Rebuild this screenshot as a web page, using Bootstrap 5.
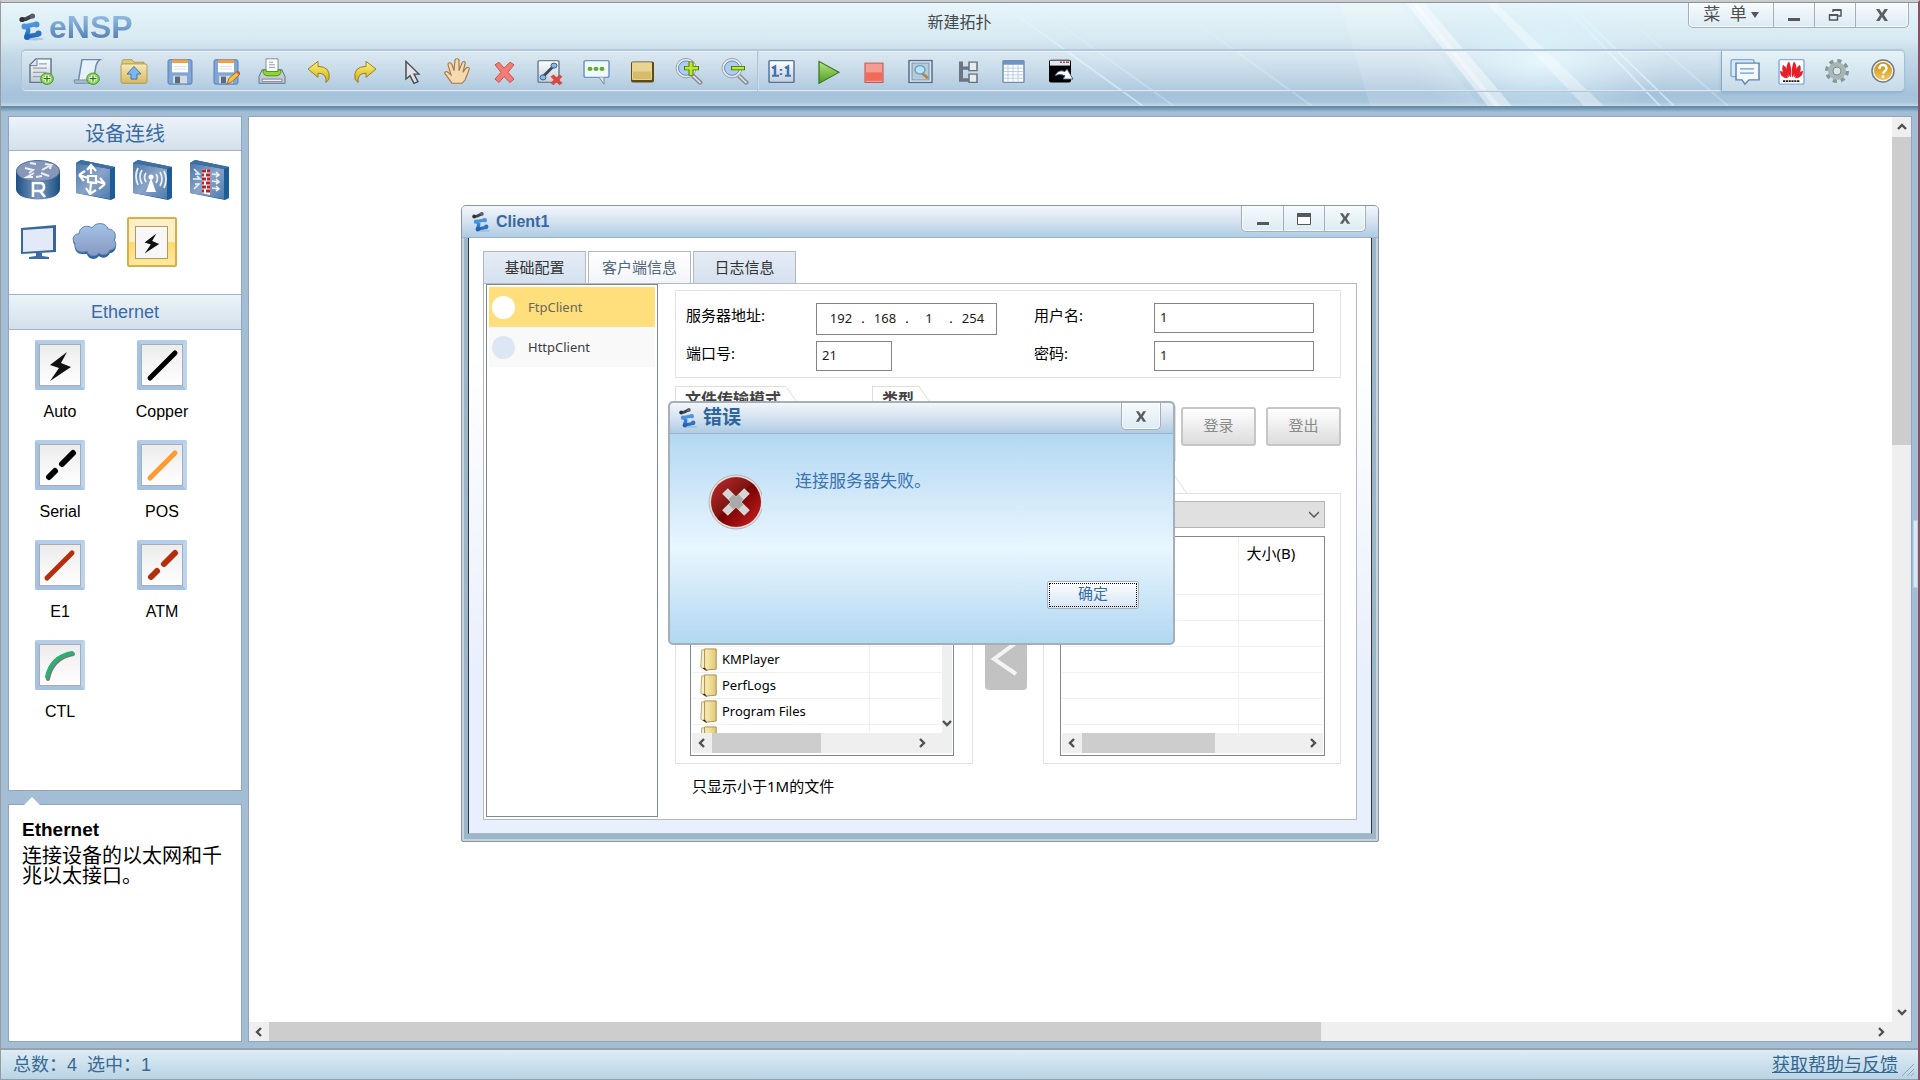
<!DOCTYPE html>
<html lang="zh-CN">
<head>
<meta charset="utf-8">
<meta name="viewport" content="width=device-width, initial-scale=1">
<title>eNSP</title>
<link href="https://cdn.jsdelivr.net/npm/bootstrap@5.3.0/dist/css/bootstrap.min.css" rel="stylesheet">
<style>
body{font-family:"Liberation Sans","Noto Sans CJK SC",sans-serif;font-size:16px;line-height:20px;color:#000;background:#a2bdd4;border-top:2px solid #c9cdcd;border-left:1px solid #979b9e;border-right:2px solid #944c62}
button,input,select{font-family:inherit}
.tahoma{font-family:"Noto Sans","Noto Sans CJK SC",sans-serif}
svg{display:block}
/* header */
.app-head{background:linear-gradient(#e8f6fb 0,#d6e8f1 38px,#c8dce9 48px,#a5c2db 92px,#a9c5dc 99px,#c3d8e4 103px);height:105px;border-bottom:1px solid #6b8798;border-top:1px solid #8d9294}
.streaks{right:0;top:0;pointer-events:none}
.brand{height:46px;padding:2px 0 0 18px}
.brand-word{font-size:32px;line-height:36px;font-weight:700;color:transparent;background:linear-gradient(#8db9e0 8px,#5580b3 30px);-webkit-background-clip:text;background-clip:text}
.doc-title{color:#45494c;top:10px}
.tool-strip{height:43px;margin-left:20px;margin-right:13px;border:1px solid #b4c6d4;border-top:2px solid #b3c8d8;border-radius:5px;background:linear-gradient(rgba(255,255,255,.36),rgba(255,255,255,.08));box-shadow:inset 0 1px #e9f2f8,inset 0 -1px #dce9f2}
.tool-main{width:722px;margin-left:5px}
.tool-sub{width:308px}
.tool-sep{width:2px;background:linear-gradient(90deg,#a3b6c6,#dfeaf2);margin-left:8px;margin-right:8px}
.tool-right{width:183px;padding-left:9px;gap:18px;border-left:1px solid #8eaabf;background:linear-gradient(#e6f3f8,#c6dae7);border-radius:0 5px 5px 0;box-shadow:0 2px 3px rgba(90,150,190,.4)}
.ico-btn{width:28px;height:32px;padding:0;border:0;background:none;display:flex;align-items:center;justify-content:center;flex:none}
.ico-btn svg{width:28px;height:27px;overflow:visible}
.ico-btn svg.disc{height:32px}
.win-ctl{top:0;border:1px solid #a5aeb4;border-top:0;border-radius:0 0 5px 5px;background:linear-gradient(#f6fbfd,#dcebf3);box-shadow:inset 0 0 0 1px rgba(255,255,255,.7)}
.win-ctl button{border:0;border-left:1px solid #a5b0b8;background:none;padding:0;color:#4c4e52;display:flex;align-items:center;justify-content:center}
.win-ctl button:first-child{border-left:0}
.head-ctl{right:9px;height:25px}
.head-ctl button{width:41px}
.head-ctl .menu-b{width:84px;font-size:17px}
.head-ctl .close-b{width:53px}
.client-ctl{right:12px;height:26px}
.client-ctl button{width:41px}
.err-ctl{right:12px;height:27px}
.err-ctl button{width:38px}
/* work area */
.shade{height:5px;background:linear-gradient(#5b8bab,#a2bdd4)}
.work{padding:4px 6px 6px 7px;gap:6px}
.side{width:234px;gap:13px}
.pane{background:#fff;border:1px solid #8ea6bf}
.pane-title{height:34px;font-size:18px;color:#3a6ba5;background:linear-gradient(#edf3f9,#d3e0ec);border-bottom:1px solid #a3b3c6}
.pane-title.cjk{font-size:20px}
.pane-title.second{border-top:1px solid #a3b3c6;height:36px}
.dev-grid{width:228px;row-gap:4px;padding-bottom:23px}
.dev{height:58px;border:0;background:none;padding:0;display:flex;align-items:center;justify-content:center}
.dev .picked{width:50px;height:50px;border:2px solid #dcae48;border-radius:2px;background:linear-gradient(#fdf0c8 50%,#fbdc74 50%,#fde9a0);display:flex;align-items:center;justify-content:center}
.link-grid{width:204px;padding-top:10px}
.link-item{height:100px;border:0;background:none;padding:0;display:flex;flex-direction:column;align-items:center;gap:12px;font-size:16px;line-height:20px;color:#000}
.tile{width:50px;height:50px;border:4px solid #a6c2e3;border-top-color:#b4cdea;border-right-color:#bdd4ee;background:linear-gradient(#ececec,#fff);box-shadow:inset 0 0 0 1px #a9adb2;border-radius:2px}
.tile svg{width:42px;height:42px}
.info{height:238px;padding:13px}
.info h2{font-size:19px;line-height:24px;font-weight:700;margin:0}
.info p{font-size:20px;line-height:20px;margin:4px 0 0}
.notch{left:14px;top:-9px}
.bar-v{width:19px;background:#efefef}
.bar-h{height:19px;background:#efefef}
.thumb{background:#cdcdcd}
.cap20{flex:0 0 20px;display:flex;align-items:center;justify-content:center}
.corner-gap{margin-right:20px}
.edge-tab{right:0;top:408px;width:5px;height:68px;background:#d8e9f3;border:1px solid #b9d0df}
.status{height:32px;border-top:2px solid #97a3ac;border-bottom:1px solid #8fa0aa;background:linear-gradient(#deecf5,#b9d4e5);font-size:18px;color:#386a92;padding:0 20px 0 12px}
.status a{color:#336790}
.grip{right:3px;bottom:2px}
/* client window */
.client{left:212px;top:88px;width:918px;border:1px solid #8b979f;border-radius:5px 5px 2px 2px;background:#9bb5c9;box-shadow:inset 0 0 0 2px #c5d4df}
.caption-bar{height:32px;padding-left:10px;gap:5px;font-weight:700;color:#3868a5;background:linear-gradient(#f3f6fb,#d5e2f0 50%,#aecce4);border-bottom:1px solid #9fb5c5;border-radius:4px 4px 0 0}
.client-body{margin:0 6px 7px;padding:13px 14px;border-left:1px solid #2f3438;border-right:1px solid #2f3438;border-bottom:1px solid #a9bac6;background:linear-gradient(#fff 20%,#e8effd 75%)}
.tab-row{gap:2px}
.tab-row button{width:103px;height:32px;border:1px solid #b4b8bd;border-bottom:0;background:linear-gradient(#e5edf6,#d5e1ef);color:#333;font-size:15px;line-height:20px;padding:0}
.tab-row button.active{background:linear-gradient(#fff,#f2f5f9);color:#52677c}
.tab-body{border:1px solid #b6bac0;background:#fff;height:537px;padding-left:2px}
.cli-list{width:172px;border:1px solid #7f8792;margin:0 0 2px;padding:2px;background:#fff}
.cli-list button{height:40px;width:100%;border:0;display:flex;align-items:center;gap:13px;padding:0 3px;font-size:13px;background:#f9f9f9;color:#3c3c3c}
.cli-list button.active{background:#fedf7c;color:#66695c}
.cli-list i{width:23px;height:23px;border-radius:50%;background:#dce7f3}
.cli-list .active i{background:#fff}
.form-side{padding:6px 16px 0 17px}
.thin{border:1px solid #e3e3e3}
.conn{height:88px;font-size:15px;padding:12px 26px 0 10px}
.conn-l{width:130px}.conn-m{width:120px}
.conn-row{height:38px}
.conn-row label{line-height:24px}
.fld{border:1px solid #858585;height:30px;font-size:13px;padding:0 5px 2px;background:#fff;color:#1b1b1b;border-radius:0;outline:0}
.ip-box{width:181px;height:32px;border:1px solid #858585;padding:0 0 3px 8px}
.ip-box input{width:32px;border:0;padding:0;text-align:center;font-size:13px;outline:0;background:none;color:#1b1b1b}
.ip-box span{width:12px;text-align:center;font-size:13px}
.w-port{width:76px}.w-user{width:160px}
.sec-tab{height:21px;margin-bottom:-1px;position:relative;z-index:1}
.sec-tab b{display:block;height:21px;border-top:1px solid #dedede;border-left:1px solid #dedede;padding:0 5px 0 9px;font-size:16px;line-height:24px;color:#444;background:#fff}
.sec-tab .wide{width:130px}
.sec-1{width:188px;margin-right:9px}.sec-2{width:304px;margin-right:5px}
.sec-body{height:55px}
.log-btn{width:75px;height:39px;margin-top:21px;border:2px solid #c6c6c6;border-radius:3px;background:linear-gradient(#fff,#dcdcdc);color:#8a8a8a;font-size:15px;padding:0 0 4px}
.files{margin-top:12px}
.file-col{width:298px}
.file-box{height:271px;padding:7px 18px 0 14px}
.file-box.remote{padding:7px 15px 0 16px}
.drive{width:100%;height:27px;border:1px solid #b5b5b5;background:#e0e0e0;appearance:none;display:block}
.drive-wrap{margin-bottom:8px}
.drive-wrap svg{right:6px;top:9px}
.lister{height:220px;border:1px solid #7f8792;padding:0 1px 2px;background:#fff}
.scroll-clip{height:196px;overflow:hidden}
.lister table{width:100%;border-collapse:collapse;table-layout:fixed;font-size:13px}
.lister th{height:31px;font-weight:400;font-size:15px;padding:0 0 0 8px}
.lister td{height:26px;padding:0 0 0 7px;border-bottom:1px solid #f0f0f0;line-height:18px}
.lister th+th,.lister td+td{border-left:1px solid #efefef}
.lister .bar-h{height:20px}
.push{width:42px;height:62px;border:0;border-radius:4px;background:#c2c2c2;padding:0}
.mid-col{width:70px;padding-top:155px;padding-left:12px}
.foot-note{font-size:15px;margin:12px 0 0 17px}
/* error dialog */
.err{left:206px;top:195px;width:507px;height:244px;z-index:5;border:2px solid #a5b0b6;border-radius:5px;background:linear-gradient(#b4d8f2 32px,#e9f6ff 145px,#b3d8f2 238px)}
.err .caption-bar{height:31px;padding-left:9px;font-size:19px;gap:5px;color:#2d659f}
.err .msg{font-size:17px;line-height:22px;color:#3a74b3;margin:0}
.ok-btn{right:34px;bottom:34px;width:92px;height:28px;border:1px solid #a9b2bb;border-radius:2px;background:linear-gradient(#fff,#d5e5f3);font-size:15px;line-height:18px;color:#356ca8;padding:1px}
.ok-btn span{display:block;height:24px;border:1px dotted #000;padding-top:1px}
.err-body{padding:37px 0 0 32px;gap:33px}
</style>
<script src="https://cdn.jsdelivr.net/npm/bootstrap@5.3.0/dist/js/bootstrap.bundle.min.js"></script>
</head>
<body class="d-flex flex-column min-vh-100">
<svg width="0" height="0" class="position-absolute" aria-hidden="true">
<defs>
<linearGradient id="gBlue" gradientUnits="userSpaceOnUse" x1="0" y1="9" x2="0" y2="26"><stop offset="0" stop-color="#58a0e6"/><stop offset="1" stop-color="#1c5fb2"/></linearGradient>
<linearGradient id="gGray" x1="0" y1="0" x2="0" y2="1"><stop offset="0" stop-color="#fff"/><stop offset="1" stop-color="#c4ccd6"/></linearGradient>
<linearGradient id="gGold" x1="0" y1="0" x2="0" y2="1"><stop offset="0" stop-color="#f7ebb8"/><stop offset="1" stop-color="#d7b85f"/></linearGradient>
<linearGradient id="gYel" x1="0" y1="0" x2="0" y2="1"><stop offset="0" stop-color="#fff27a"/><stop offset="1" stop-color="#cfae14"/></linearGradient>
<linearGradient id="gGreen" x1="0" y1="0" x2="0" y2="1"><stop offset="0" stop-color="#b8e886"/><stop offset="1" stop-color="#4d9a1c"/></linearGradient>
<linearGradient id="gDev" x1="0" y1="0" x2="1" y2="1"><stop offset="0" stop-color="#4a78aa"/><stop offset=".5" stop-color="#8ba3c8"/><stop offset="1" stop-color="#4c7cae"/></linearGradient>
<linearGradient id="gCyl" x1="0" y1="0" x2="1" y2="0"><stop offset="0" stop-color="#1e4f82"/><stop offset=".5" stop-color="#7d9cc3"/><stop offset="1" stop-color="#1a4c7f"/></linearGradient>
<linearGradient id="gCloud" x1="0" y1="0" x2="0" y2="1"><stop offset="0" stop-color="#a5c3e8"/><stop offset="1" stop-color="#8898c0"/></linearGradient>
<linearGradient id="gRed" x1="0" y1="0" x2="1" y2="1"><stop offset="0" stop-color="#c02c2c"/><stop offset=".45" stop-color="#7d1512"/><stop offset=".5" stop-color="#7a0000"/><stop offset="1" stop-color="#cf2424"/></linearGradient>
<linearGradient id="gHelp" x1="0" y1="0" x2="0" y2="1"><stop offset="0" stop-color="#c88c10"/><stop offset="1" stop-color="#f2c65c"/></linearGradient>
<linearGradient id="gFold" x1="0" y1="0" x2="1" y2="0"><stop offset="0" stop-color="#fbf0b9"/><stop offset="1" stop-color="#e1c673"/></linearGradient>
<symbol id="logo" viewBox="0 0 26 28"><ellipse cx="16" cy="26" rx="9" ry="1.500" fill="#7fa9d2" opacity=".5"/><path d="m3 6.500 4-.5 6-3" fill="none" stroke="#3f4449" stroke-width="4" stroke-linecap="round" stroke-linejoin="round"/><circle cx="13.500" cy="3" r="2.600" fill="#5a6066"/><circle cx="3" cy="6.500" r="2.600" fill="#2f3337"/><path d="M6 13.500 17 11M7 13.500q4 3 1 7.500v2.500L19 21.500" fill="none" stroke="url(#gBlue)" stroke-width="4.400" stroke-linecap="round" stroke-linejoin="round"/><circle cx="5.500" cy="13.500" r="3" fill="#4a93dc"/><circle cx="17.500" cy="11.500" r="3" fill="#4a93dc"/><circle cx="8" cy="24" r="3" fill="#1f66ba"/><circle cx="19.500" cy="20.500" r="3" fill="#2a73c6"/></symbol>
<symbol id="bolt" viewBox="0 0 42 42"><path d="M28 8 11 21l9 3-9 13 21-14-10-4z" fill="#111"/></symbol>
<symbol id="up" viewBox="0 0 10 10"><path d="M1 7 5 3l4 4" fill="none" stroke="#505050" stroke-width="2.400"/></symbol>
<symbol id="down" viewBox="0 0 10 10"><path d="M1 3l4 4 4-4" fill="none" stroke="#505050" stroke-width="2.400"/></symbol>
<symbol id="left" viewBox="0 0 10 10"><path d="M7 1 3 5l4 4" fill="none" stroke="#505050" stroke-width="2.400"/></symbol>
<symbol id="right" viewBox="0 0 10 10"><path d="M3 1l4 4-4 4" fill="none" stroke="#505050" stroke-width="2.400"/></symbol>
<symbol id="cross" viewBox="0 0 14 14"><path d="M1 1h3.500L7 5l2.500-4H13L9 7l4 6H9.500L7 9l-2.500 4H1l4-6z" fill="#5b5d62"/></symbol>
<symbol id="floppy" viewBox="0 0 28 32" preserveAspectRatio="none"><rect x="2" y="2" width="24" height="29" rx="2" fill="#7fa6d6" stroke="#527bb0"/><path d="M6 3h16v14H6z" fill="#fff"/><path d="M6 2h16v4H6z" fill="#f2a046"/><path d="M7 21h14v9H7z" fill="#d5dae0"/><path d="M9 22h5v8H9z" fill="#5b6b7c"/><path d="M8 10h12M8 13h12" stroke="#d8dde3"/></symbol>
<symbol id="plus" viewBox="0 0 14 14" preserveAspectRatio="none"><circle cx="7" cy="7" r="6.300" fill="#8fd45b" stroke="#3c8e1c"/><path d="M7 3v8M3 7h8" stroke="#fff" stroke-width="3.400"/><path d="M7 3.500v7M3.500 7h7" stroke="#2f7a14" stroke-width="1.300"/></symbol>
<symbol id="lens" viewBox="0 0 28 32" preserveAspectRatio="none"><path d="m17 20 8 9" stroke="#858b93" stroke-width="5" stroke-linecap="round"/><path d="m18 21 7 8" stroke="#d9dde1" stroke-width="2" stroke-linecap="round"/><ellipse cx="11" cy="12" rx="9" ry="10" fill="#aecbf0" stroke="#e6eaee" stroke-width="3"/><ellipse cx="11" cy="12" rx="10" ry="11.500" fill="none" stroke="#949ca5"/><ellipse cx="11" cy="12" rx="7.500" ry="8.500" fill="none" stroke="#5c87bc"/></symbol>
<symbol id="folder" viewBox="0 0 18 26"><path d="M2 3h3v17l1 4-5-3z" fill="#f4eed4" stroke="#b9a468"/><path d="m3 22 4 3 1-2-3-2z" fill="#222"/><path d="M5 2h12v21l-10 1-2-3z" fill="url(#gFold)" stroke="#a88f4c"/></symbol>
<symbol id="slab" viewBox="0 0 40 40"><path d="m1 3 5-3 34 7v31l-4 2-35-7z" fill="#1d5c97"/><path d="m1 3 34 6v30L1 33z" fill="url(#gDev)"/><path d="m1 3 5-3 34 7-5 2z" fill="#3e6fa4"/></symbol>
</defs>
</svg>

<header class="app-head position-relative overflow-hidden">
<svg class="streaks position-absolute" width="1000" height="103" viewBox="918 2 1000 128" preserveAspectRatio="none" aria-hidden="true">
<defs><radialGradient id="glow"><stop offset="0" stop-color="#e0f8ff" stop-opacity=".85"/><stop offset="1" stop-color="#d5f0fb" stop-opacity="0"/></radialGradient></defs>
<ellipse cx="1540" cy="75" rx="130" ry="75" fill="url(#glow)"/>
<path d="M1406 2h18l88 128h-24z" fill="#fff" opacity=".45"/><path d="M1412 2h4l84 128h-6z" fill="#fff" opacity=".35"/>
<path d="M1486 2h10l108 128h-20z" fill="#fff" opacity=".35"/>
<path d="m1562 2 98 128M1568 2l106 128M1000 2l143 128" stroke="#dff8ff" stroke-width="2" opacity=".6"/>
<path d="m1030 2 144 128M1200 30l112 100M1640 35l88 95" stroke="#dff8ff" stroke-width="2" opacity=".3"/>
<path d="M1340 2h60l80 128h-110z" fill="#fff" opacity=".12"/>
</svg>
<div class="brand d-flex align-items-center position-relative">
<svg width="26" height="28"><use href="#logo" width="26" height="28"/></svg>
<span class="brand-word ps-1">eNSP</span>
</div>
<div class="doc-title position-absolute start-50 translate-middle-x">新建拓扑</div>
<div class="win-ctl head-ctl position-absolute d-flex">
<button class="menu-b" type="button">菜&nbsp; 单<svg class="ms-1" width="8" height="8"><path d="M0 1h8L4 7z" fill="#55575c"/></svg></button>
<button type="button" aria-label="最小化"><svg width="14" height="14"><path d="M1 10h12v3H1z" fill="#55575c"/></svg></button>
<button type="button" aria-label="还原"><svg width="14" height="14"><path d="M5 4V2h8v6h-3M1.500 7h8v5h-8z" fill="none" stroke="#55575c" stroke-width="1.500"/><path d="M5 1h8v2H5zM1 6h9v2H1z" fill="#55575c"/></svg></button>
<button class="close-b" type="button" aria-label="关闭"><svg width="14" height="14"><use href="#cross" width="14" height="14"/></svg></button>
</div>
<div class="tool-strip position-relative d-flex">
<div class="tool-main d-flex align-items-center justify-content-between">
<button class="ico-btn" aria-label="新建"><svg viewBox="0 0 28 32" preserveAspectRatio="none"><path d="M9 1h15v28H3V8z" fill="url(#gGray)" stroke="#63788f" stroke-width="1.500"/><path d="M10 2v7H3" fill="#dfe5ea" stroke="#63788f"/><path d="M12 7h8M6 12h14M6 17h13M6 22h9" stroke="#99a4b0" stroke-width="1.500"/><use href="#plus" x="13" y="17" width="14" height="15"/></svg></button>
<button class="ico-btn" aria-label="新建试卷"><svg viewBox="0 0 28 32" preserveAspectRatio="none"><path d="M9 2h18q-3 2-4 7l-3 20H2q4-2 4-6z" fill="#e9f1f8" stroke="#6d8daa" stroke-width="1.500"/><path d="M1 26h16v4H2z" fill="#a9bccd" stroke="#6d8daa"/><use href="#plus" x="13" y="17" width="14" height="15"/></svg></button>
<button class="ico-btn" aria-label="打开"><svg viewBox="0 0 28 32" preserveAspectRatio="none"><path d="M2 4q0-2 2-2h8l2 3h10v4H2z" fill="#e2c980" stroke="#b2954b"/><rect x="1" y="7" width="26" height="23" rx="2" fill="url(#gGold)" stroke="#b2954b"/><path d="m14 10 7 9h-4v6h-6v-6H7z" fill="#7db4f2" stroke="#3a6fbd"/></svg></button>
<button class="ico-btn" aria-label="保存"><svg viewBox="0 0 28 32" preserveAspectRatio="none"><use href="#floppy" width="28" height="32"/></svg></button>
<button class="ico-btn" aria-label="另存为"><svg viewBox="0 0 28 32" preserveAspectRatio="none"><use href="#floppy" width="28" height="32"/><path d="m15 31 2-7 8-8 3 3-8 9z" fill="#f5c33b" stroke="#a2672a"/><path d="m24 17 3 3 1-3-2-2z" fill="#d8563b"/></svg></button>
<button class="ico-btn" aria-label="打印"><svg viewBox="0 0 28 32" preserveAspectRatio="none"><path d="M4 14h20l3 8v8H1v-8z" fill="#c3ccd6" stroke="#5d6e80"/><path d="M8 1h12v16H8z" fill="#fff" stroke="#7a8896"/><path d="M11 5h4M11 8h6M11 11h6" stroke="#8a949e"/><path d="M5 14q0 7 4 7h10q4 0 4-7h-3v2H8v-2z" fill="#8fd630" stroke="#4d8f16"/><path d="M4 25h20v3H4z" fill="#eef1f4" stroke="#76838f"/></svg></button>
<button class="ico-btn" aria-label="撤销"><svg viewBox="0 0 28 32" preserveAspectRatio="none"><path d="m3 13 10-9v6q13 0 11 15l-3 4q1-11-8-11v5z" fill="url(#gYel)" stroke="#927a12"/></svg></button>
<button class="ico-btn" aria-label="恢复"><svg viewBox="0 0 28 32" preserveAspectRatio="none"><path d="M25 13 15 4v6Q2 10 4 25l3 4q-1-11 8-11v5z" fill="url(#gYel)" stroke="#927a12"/></svg></button>
<button class="ico-btn" aria-label="选择"><svg viewBox="0 0 28 32" preserveAspectRatio="none"><path d="M9 4v21l4-4 4 9 4-2-4-9h5z" fill="#e2e3e6" stroke="#4b4e54" stroke-width="1.500"/></svg></button>
<button class="ico-btn" aria-label="拖动"><svg viewBox="0 0 28 32" preserveAspectRatio="none"><path d="M9 30 3 20c-3-3 0-5 2-3l3 3L5 8c0-3 3-3 4 0l2 7 1-12c0-3 4-3 4 0v12l3-9c1-3 4-2 3 1l-2 10 3-5c2-2 4-1 3 2l-4 12-3 4z" fill="#f6d9ae" stroke="#a87a45" stroke-width="1.200"/></svg></button>
<button class="ico-btn" aria-label="删除"><svg viewBox="0 0 28 32" preserveAspectRatio="none"><path d="m5 8 4-3 5 7 6-7 4 3-6 9 6 8-4 4-6-7-5 7-4-4 6-8z" fill="#f37c74" stroke="#c44c48"/></svg></button>
<button class="ico-btn" aria-label="删除连线"><svg viewBox="0 0 28 32" preserveAspectRatio="none"><rect x="2" y="3" width="21" height="26" rx="2" fill="url(#gGray)" stroke="#6b8298" stroke-width="1.500"/><path d="m7 22 11-13" stroke="#3a4754" stroke-width="3"/><circle cx="18" cy="9" r="3" fill="#8cb6e8" stroke="#2f5d94"/><circle cx="7" cy="23" r="3" fill="#8cb6e8" stroke="#2f5d94"/><path d="m16 21 9 10m0-10-9 10" stroke="#d9483f" stroke-width="4"/></svg></button>
<button class="ico-btn" aria-label="文本"><svg viewBox="0 0 28 32" preserveAspectRatio="none"><rect x="2" y="3" width="25" height="20" rx="2" fill="#f2f7fc" stroke="#6c96c2" stroke-width="1.500"/><path d="m17 23 5 8v-8" fill="#dfe9f2" stroke="#72869a"/><g fill="#5fae2d"><circle cx="8" cy="13" r="2.500"/><circle cx="14" cy="13" r="2.500"/><circle cx="20" cy="13" r="2.500"/></g></svg></button>
<button class="ico-btn" aria-label="矩形"><svg viewBox="0 0 28 32" preserveAspectRatio="none"><rect x="3" y="4" width="23" height="25" rx="2" fill="#5d4b18"/><rect x="4" y="5" width="20" height="21" rx="1" fill="#e9d592"/><path d="M5 16h18v9H5z" fill="#d6bb68"/></svg></button>
<button class="ico-btn" aria-label="放大"><svg viewBox="0 0 28 32" preserveAspectRatio="none"><use href="#lens" width="28" height="32"/><path d="M16 4v17M9 12h15" stroke="#3f7d11" stroke-width="5"/><path d="M16 5v15M10 12h13" stroke="#c6e823" stroke-width="3"/></svg></button>
<button class="ico-btn" aria-label="缩小"><svg viewBox="0 0 28 32" preserveAspectRatio="none"><use href="#lens" width="28" height="32"/><path d="M10 12h14" stroke="#3f7d11" stroke-width="5"/><path d="M11 12h12" stroke="#c6e823" stroke-width="3"/></svg></button>
</div>
<div class="tool-sep"></div>
<div class="tool-sub d-flex align-items-center justify-content-between">
<button class="ico-btn" aria-label="原始大小"><svg viewBox="0 0 28 32" preserveAspectRatio="none"><rect x="2" y="3" width="25" height="26" rx="1" fill="url(#gGray)" stroke="#54759a" stroke-width="1.500"/><path d="M5 12l3-2v11M5 21h7M18 12l3-2v11M18 21h6" fill="none" stroke="#3a75b8" stroke-width="2.500"/><path d="M14 13v2M14 18v2" stroke="#3a75b8" stroke-width="2.500"/></svg></button>
<button class="ico-btn" aria-label="启动"><svg viewBox="0 0 28 32" preserveAspectRatio="none"><path d="m5 4 20 13L5 30z" fill="url(#gGreen)" stroke="#2f7417" stroke-width="1.200"/></svg></button>
<button class="ico-btn" aria-label="停止"><svg viewBox="0 0 28 32" preserveAspectRatio="none"><rect x="5" y="6" width="18" height="23" fill="#f59c90" stroke="#b75048"/><path d="M6 17h16v10H6z" fill="#f26a5a"/></svg></button>
<button class="ico-btn" aria-label="采集数据"><svg viewBox="0 0 28 32" preserveAspectRatio="none"><rect x="2" y="3" width="23" height="26" fill="#dce6ef" stroke="#50708f" stroke-width="1.500"/><rect x="5" y="6" width="17" height="20" fill="#b9c9d8" stroke="#7791a9"/><path d="m15 18 6 6" stroke="#b8853e" stroke-width="3"/><circle cx="13" cy="14" r="5" fill="#b7e4fa" stroke="#6aa0c8" stroke-width="1.500"/></svg></button>
<button class="ico-btn" aria-label="显示接口"><svg viewBox="0 0 28 32" preserveAspectRatio="none"><path d="M7 4v22h9M7 12h9" fill="none" stroke="#6b7682" stroke-width="4"/><path d="M15 5h8v10h-8zM15 19h8v10h-8z" fill="#e6ebef" stroke="#66717c" stroke-width="1.500"/></svg></button>
<button class="ico-btn" aria-label="显示网格"><svg viewBox="0 0 28 32" preserveAspectRatio="none"><rect x="3" y="3" width="21" height="26" rx="1" fill="#fff" stroke="#6f90b4" stroke-width="1.500"/><path d="M3 3h21v5H3z" fill="#6c95c5"/><path d="M4 12h19M4 16h19M4 20h19M4 24h19M8 8v20M13 8v20M18 8v20" stroke="#b5cbe2"/></svg></button>
<button class="ico-btn" aria-label="打开终端"><svg viewBox="0 0 28 32" preserveAspectRatio="none"><rect x="2" y="2" width="22" height="27" rx="2" fill="#000"/><path d="M3 3h20v6H3z" fill="#dfe8f2"/><path d="M13 5h2M16 5h2M19 5h3" stroke="#a44" stroke-width="2"/><path d="M8 21q3-8 10-5l2-3 6 12h-10l2-4q-5-3-10 0z" fill="#fff" stroke="#335c89"/></svg></button>
</div>
<div class="tool-right ms-auto d-flex align-items-center">
<button class="ico-btn" aria-label="论坛"><svg viewBox="0 0 28 32" preserveAspectRatio="none"><rect x="0" y="2" width="23" height="20" rx="2" fill="#d9e9f8" stroke="#84abd4" stroke-width="1.500"/><path d="M5 6h23v20H18l-4 5-3-5H5z" fill="#f3f8fc" stroke="#5e86b3" stroke-width="1.500"/><path d="M9 13h14M9 18h14" stroke="#6f9ac8" stroke-width="1.500"/></svg></button>
<button class="ico-btn" aria-label="华为"><svg viewBox="0 0 28 32" preserveAspectRatio="none"><rect x="2" y="2" width="25" height="29" rx="2" fill="#fff" stroke="#86aee0" stroke-width="1.500"/><g fill="#e5202a"><path d="M14 23C9 18 8 9 12 4q3 6 2 19zM15 23c5-5 6-14 2-19q-3 6-2 19z"/><path d="M12 23C6 20 4 14 6 8q6 5 6 15zM17 23c6-3 8-9 6-15q-6 5-6 15z"/><path d="M11 24q-8 0-8-9 6 2 8 9zM18 24q8 0 8-9-6 2-8 9z"/></g><path d="M6 27.500h17" stroke="#222" stroke-width="2" stroke-dasharray="2.200 .6"/></svg></button>
<button class="ico-btn" aria-label="设置"><svg class="disc" viewBox="0 0 28 32"><circle cx="14" cy="16" r="10" fill="none" stroke="#879697" stroke-width="4" stroke-dasharray="4 3.854"/><circle cx="14" cy="16" r="6.500" fill="none" stroke="#a9b6b6" stroke-width="5"/><circle cx="14" cy="16" r="4" fill="#dbe7ec" stroke="#7d8c8e"/></svg></button>
<button class="ico-btn" aria-label="帮助"><svg class="disc" viewBox="0 0 28 32"><circle cx="14" cy="16" r="11" fill="#f4f4f0" stroke="#767c80" stroke-width="1.500"/><circle cx="14" cy="16" r="9" fill="url(#gHelp)"/><path d="M10.500 14q0-4 3.500-4t3.500 3.500q0 1.500-1.500 2.500t-2 2.500M14 20.500v2.500" fill="none" stroke="#fff" stroke-width="2.400"/></svg></button>
</div>
</div>
</header>
<div class="shade"></div>

<main class="work d-flex flex-grow-1 position-relative">
<aside class="side d-flex flex-column flex-shrink-0">
<section class="pane flex-grow-1">
<div class="pane-title cjk d-flex align-items-center justify-content-center">设备连线</div>
<div class="dev-grid row row-cols-4 g-0">
<button class="dev col" aria-label="路由器"><svg width="44" height="40"><path d="M0 11v18c0 14 44 14 44 0V11z" fill="url(#gCyl)"/><ellipse cx="22" cy="11" rx="21.500" ry="10.500" fill="#8697b8" stroke="#4f7099"/><path d="m9 8 8 2-4 3M20 4l-6-1M26 10l9-5-6-1M35 5l-1 4M18 13l-7 4h6M25 13l8 3M20 17l6-1" fill="none" stroke="#e9f0f8" stroke-width="2"/><path d="M17 37V23h7q4 0 4 4t-4 4h-7m7 0 5 6" fill="none" stroke="#fff" stroke-width="2.600"/></svg></button>
<button class="dev col" aria-label="交换机"><svg width="40" height="40"><use href="#slab"/><path d="M4 15l9 3M4 15l6-4M4 15l5 6M16 6v8M12 10l4-5 5 6M13 16h8v7l-8-1zM21 21l9 3M30 24l-5-6M30 24l-6 5M16 23l-1 10M11 28l4 6 6-4" fill="none" stroke="#fff" stroke-width="2.200"/></svg></button>
<button class="dev col" aria-label="无线局域网"><svg width="40" height="40"><use href="#slab"/><path d="M19 18l5 14H14z" fill="#fff"/><circle cx="19" cy="17" r="2.500" fill="#fff"/><path d="M14 13q-3 4 0 9M10 10q-4 6 0 14M6 8q-4 8 0 17M24 14q3 4 0 9M28 12q4 7 0 14M32 11q4 8 0 17" fill="none" stroke="#e9f1f8" stroke-width="1.800"/></svg></button>
<button class="dev col" aria-label="防火墙"><svg width="40" height="40"><use href="#slab"/><path d="m13 9 8 1v25l-8-2z" fill="#fff"/><path d="M13 11h4m1 0h3M13 15h2m2 0h4M13 19h4m1 0h3M13 23h2m2 0h4M13 27h4m1 0h3M13 31h2m2 0h4" stroke="#b92028" stroke-width="3"/><path d="m5 9 5 5-4 0M4 19h7l-3-3M5 29l5-5-4 0M23 14l7 1M27 12l3 3-3 2M23 21l7 1M27 19l3 3-3 2M23 28l7 1M27 26l3 3-3 2" fill="none" stroke="#eaf1f8" stroke-width="1.600"/></svg></button>
<button class="dev col" aria-label="终端"><svg width="38" height="36"><path d="m2 4 35-3v27L2 30z" fill="#36689e"/><path d="m4 6 30-2v22L4 28z" fill="#e1eaf6"/><path d="M17 29h6v3l7 1v2H10v-2l7-1z" fill="#3e6c9f"/></svg></button>
<button class="dev col" aria-label="其他设备"><svg width="46" height="40"><path d="M12 32C5 33 2 28 3 23c-4-3-1-10 4-9 0-7 8-10 13-6 4-7 15-5 16 1 7 0 9 7 6 11 4 4 1 11-4 11-2 5-8 6-11 3-4 5-11 3-12-2z" fill="#2f669f"/><path d="M12 30C5 31 2 26 3 21c-4-3-1-10 4-9 0-7 8-10 13-6 4-7 15-5 16 1 7 0 9 7 6 11 4 4 1 10-4 10-2 5-8 6-11 3-4 5-11 3-12-2z" fill="url(#gCloud)" stroke="#5b86b6"/></svg></button>
<button class="dev col" aria-label="设备连线"><span class="picked"><svg width="33" height="33"><rect x=".5" y=".5" width="32" height="32" fill="#f7f7f7" stroke="#b49a55"/><use href="#bolt" x="2" y="2" width="29" height="29"/></svg></span></button>
</div>
<div class="pane-title second d-flex align-items-center justify-content-center">Ethernet</div>
<div class="link-grid row row-cols-2 g-0">
<button class="link-item col"><span class="tile"><svg><use href="#bolt"/></svg></span>Auto</button>
<button class="link-item col"><span class="tile"><svg><path d="M9 34 34 9" stroke="#000" stroke-width="5" stroke-linecap="round"/></svg></span>Copper</button>
<button class="link-item col"><span class="tile"><svg><path d="m10 33 6-6M23 20 34 9" stroke="#000" stroke-width="6" stroke-linecap="round"/></svg></span>Serial</button>
<button class="link-item col"><span class="tile"><svg><path d="M9 34 34 9" stroke="#ff9b31" stroke-width="5" stroke-linecap="round"/></svg></span>POS</button>
<button class="link-item col"><span class="tile"><svg><path d="M8 34 33 9" stroke="#b52e0c" stroke-width="5" stroke-linecap="round"/></svg></span>E1</button>
<button class="link-item col"><span class="tile"><svg><path d="m10 33 6-6M23 20 34 9" stroke="#b52e0c" stroke-width="6" stroke-linecap="round"/></svg></span>ATM</button>
<button class="link-item col"><span class="tile"><svg><path d="M9 35Q13 14 34 10" fill="none" stroke="#777" stroke-width="4" stroke-linecap="round"/><path d="M8 33Q12 13 33 9" fill="none" stroke="#2fae74" stroke-width="4" stroke-linecap="round"/></svg></span>CTL</button>
</div>
</section>
<section class="pane info position-relative">
<svg class="notch position-absolute" width="18" height="10" aria-hidden="true"><path d="m0 10 9-9 9 9z" fill="#fff"/></svg>
<h2>Ethernet</h2>
<p>连接设备的以太网和千兆以太接口。</p>
</section>
</aside>

<section class="pane flex-grow-1 d-flex flex-column">
<div class="d-flex flex-grow-1">
<div class="flex-grow-1 position-relative">

<div class="client position-absolute">
<div class="caption-bar d-flex align-items-center position-relative">
<svg width="19" height="22"><use href="#logo" width="19" height="22"/></svg><span>Client1</span>
<div class="win-ctl client-ctl position-absolute d-flex">
<button type="button" aria-label="最小化"><svg width="14" height="14"><path d="M1 10h12v3H1z" fill="#55575c"/></svg></button>
<button type="button" aria-label="最大化"><svg width="14" height="12"><path d="M.5.500h13v11H.5z" fill="#fff" stroke="#55575c"/><path d="M0 0h14v4H0z" fill="#55575c"/></svg></button>
<button type="button" aria-label="关闭"><svg width="12" height="13"><use href="#cross" width="12" height="13"/></svg></button>
</div>
</div>
<div class="client-body">
<div class="tab-row d-flex"><button type="button">基础配置</button><button type="button" class="active">客户端信息</button><button type="button">日志信息</button></div>
<div class="tab-body d-flex">
<div class="cli-list flex-shrink-0 tahoma"><button type="button" class="active"><i></i>FtpClient</button><button type="button"><i></i>HttpClient</button></div>
<form class="form-side flex-grow-1 tahoma">
<div class="conn thin">
<div class="conn-row d-flex">
<label class="conn-l" for="ip1">服务器地址:</label>
<div class="ip-box d-flex align-items-center"><input id="ip1" value="192"><span>.</span><input aria-label="IP 2" value="168"><span>.</span><input aria-label="IP 3" value="1"><span>.</span><input aria-label="IP 4" value="254"></div>
<label class="ms-auto conn-m" for="usr">用户名:</label><input id="usr" class="fld w-user" value="1">
</div>
<div class="conn-row d-flex">
<label class="conn-l" for="port">端口号:</label><input id="port" class="fld w-port" value="21">
<label class="ms-auto conn-m" for="pwd">密码:</label><input id="pwd" class="fld w-user" value="1">
</div>
</div>
<div class="d-flex mt-2">
<div class="sec-1"><div class="sec-tab d-flex"><b>文件传输模式</b><svg width="14" height="21"><path d="M0 .500 14 20.500" stroke="#dedede"/></svg></div><div class="sec-body thin"></div></div>
<div class="sec-2"><div class="sec-tab d-flex"><b>类型</b><svg width="14" height="21"><path d="M0 .500 14 20.500" stroke="#dedede"/></svg></div><div class="sec-body thin"></div></div>
<button type="button" class="log-btn">登录</button>
<button type="button" class="log-btn ms-auto">登出</button>
</div>
<div class="files d-flex">
<div class="file-col">
<div class="sec-tab d-flex"><b class="wide"></b><svg width="14" height="21"><path d="M0 .500 14 20.500" stroke="#dedede"/></svg></div>
<div class="file-box thin">
<div class="drive-wrap position-relative"><select class="drive" aria-label="本地磁盘"></select></div>
<div class="lister">
<div class="d-flex"><div class="scroll-clip flex-grow-1"><table><colgroup><col style="width:177px"><col></colgroup>
<tr><th></th><th></th></tr><tr><td></td><td></td></tr><tr><td></td><td></td></tr>
<tr><td><svg width="19" height="25"><use href="#folder" width="19" height="25"/></svg></td><td></td></tr>
<tr><td><div class="d-flex align-items-center gap-1"><svg width="19" height="25"><use href="#folder" width="19" height="25"/></svg>KMPlayer</div></td><td></td></tr>
<tr><td><div class="d-flex align-items-center gap-1"><svg width="19" height="25"><use href="#folder" width="19" height="25"/></svg>PerfLogs</div></td><td></td></tr>
<tr><td><div class="d-flex align-items-center gap-1"><svg width="19" height="25"><use href="#folder" width="19" height="25"/></svg>Program Files</div></td><td></td></tr>
<tr><td><svg width="19" height="25"><use href="#folder" width="19" height="25"/></svg></td><td></td></tr>
</table></div><div class="bar-v d-flex flex-column justify-content-end"><div class="cap20"><svg width="10" height="10"><use href="#down"/></svg></div></div></div>
<div class="bar-h d-flex"><div class="cap20"><svg width="10" height="10"><use href="#left"/></svg></div><div class="thumb" style="width:42%"></div><div class="cap20 ms-auto corner-gap"><svg width="10" height="10"><use href="#right"/></svg></div></div>
</div>
</div>
</div>
<div class="mid-col"><button type="button" class="push" aria-label="下载"><svg width="42" height="62"><path d="M32 14 9 31l22 15" fill="none" stroke="#f4f4f4" stroke-width="4"/></svg></button></div>
<div class="file-col">
<div class="sec-tab d-flex"><b class="wide"></b><svg width="14" height="21"><path d="M0 .500 14 20.500" stroke="#dedede"/></svg></div>
<div class="file-box remote thin">
<div class="drive-wrap position-relative"><select class="drive" aria-label="服务器目录" disabled></select><svg class="position-absolute" width="10" height="10"><path d="m0 2 5 5 5-5" fill="none" stroke="#555" stroke-width="1.500"/></svg></div>
<div class="lister">
<div class="scroll-clip"><table><colgroup><col style="width:176px"><col></colgroup>
<tr><th></th><th>大小(B)</th></tr><tr><td></td><td></td></tr><tr><td></td><td></td></tr><tr><td></td><td></td></tr><tr><td></td><td></td></tr><tr><td></td><td></td></tr><tr><td></td><td></td></tr><tr><td></td><td></td></tr>
</table></div>
<div class="bar-h d-flex"><div class="cap20"><svg width="10" height="10"><use href="#left"/></svg></div><div class="thumb" style="width:51%"></div><div class="cap20 ms-auto"><svg width="10" height="10"><use href="#right"/></svg></div></div>
</div>
</div>
</div>
</div>
<p class="foot-note">只显示小于1M的文件</p>
</form>
</div>
</div>

<div class="err position-absolute" role="alertdialog" aria-label="错误">
<div class="caption-bar d-flex align-items-center position-relative">
<svg width="19" height="22"><use href="#logo" width="19" height="22"/></svg><span>错误</span>
<div class="win-ctl err-ctl position-absolute d-flex"><button type="button" aria-label="关闭"><svg width="12" height="13"><use href="#cross" width="12" height="13"/></svg></button></div>
</div>
<div class="err-body d-flex align-items-start">
<svg width="60" height="62"><circle cx="34" cy="31" r="27" fill="#e4e0e0" stroke="#b9b4b6"/><circle cx="34" cy="31" r="25" fill="url(#gRed)"/><path d="m23 20 22 22M45 20 23 42" stroke="#d5d5d5" stroke-width="8"/><path d="m29 26 10 10M39 26 29 36" stroke="#aaa" stroke-width="7"/></svg>
<p class="msg">连接服务器失败。</p>
</div>
<button type="button" class="ok-btn position-absolute"><span>确定</span></button>
</div>
</div>

</div>
<div class="bar-v d-flex flex-column"><div class="cap20"><svg width="10" height="10"><use href="#up"/></svg></div><div class="thumb" style="height:34%"></div><div class="cap20 mt-auto"><svg width="10" height="10"><use href="#down"/></svg></div></div>
</div>
<div class="bar-h d-flex"><div class="cap20"><svg width="10" height="10"><use href="#left"/></svg></div><div class="thumb" style="width:63.3%"></div><div class="cap20 ms-auto corner-gap"><svg width="10" height="10"><use href="#right"/></svg></div></div>
</section>
<div class="edge-tab position-absolute"></div>
</main>

<footer class="status d-flex align-items-center justify-content-between position-relative">
<span>总数：4&nbsp; 选中：1</span><a href="#">获取帮助与反馈</a>
<svg class="grip position-absolute" width="14" height="14" aria-hidden="true"><path d="M1 13 13 1M6 13l7-7M10 13l3-3" stroke="#90a6b5"/></svg>
</footer>
</body>
</html>
